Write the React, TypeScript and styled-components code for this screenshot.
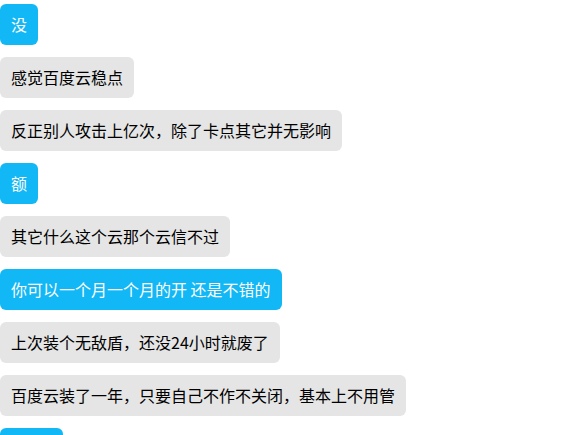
import React from 'react'
import styled, { createGlobalStyle } from 'styled-components'

type Message = {
  id: number
  text: string
  mine: boolean
}

const messages: Message[] = [
  { id: 1, text: '没', mine: true },
  { id: 2, text: '感觉百度云稳点', mine: false },
  { id: 3, text: '反正别人攻击上亿次，除了卡点其它并无影响', mine: false },
  { id: 4, text: '额', mine: true },
  { id: 5, text: '其它什么这个云那个云信不过', mine: false },
  { id: 6, text: '你可以一个月一个月的开 还是不错的', mine: true },
  { id: 7, text: '上次装个无敌盾，还没24小时就废了', mine: false },
  { id: 8, text: '百度云装了一年，只要自己不作不关闭，基本上不用管', mine: false },
  { id: 9, text: '好的~', mine: true },
]

const GlobalStyle = createGlobalStyle`
  html, body {
    margin: 0;
    padding: 0;
    background: #ffffff;
    font-family: "Noto Sans CJK SC", "Noto Sans", "Liberation Sans", sans-serif;
  }
`

const App: React.FC = () => {
  return (
    <>
      <GlobalStyle />
      <ChatList>
        {messages.map((msg) => (
          <Bubble key={msg.id} mine={msg.mine}>
            {msg.text}
          </Bubble>
        ))}
      </ChatList>
    </>
  )
}

const ChatList = styled.div`
  display: flex;
  flex-direction: column;
  align-items: flex-start;
  gap: 12px;
  padding-top: 4px;
  height: 431px;
  overflow: hidden;
`

const Bubble = styled.div<{ mine: boolean }>`
  flex-shrink: 0;
  padding: 10px 11px;
  font-size: 16px;
  line-height: 21px;
  white-space: nowrap;
  border-radius: 6px;
  background-color: ${(props) => (props.mine ? '#12b7f5' : '#e5e5e5')};
  color: ${(props) => (props.mine ? '#ffffff' : '#000000')};
`

export default App
